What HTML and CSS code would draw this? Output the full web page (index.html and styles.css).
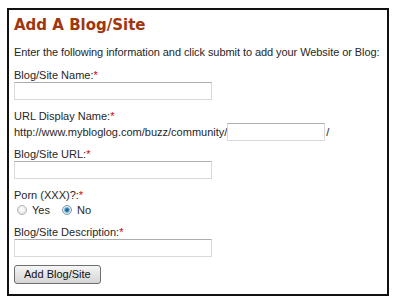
FILE: index.html
```html
<!DOCTYPE html>
<html>
<head>
<meta charset="utf-8">
<link rel="stylesheet" href="styles.css">
</head>
<body>
<div class="box">
  <h1 class="title">Add A Blog/Site</h1>
  <p class="intro">Enter the following information and click submit to add your Website or Blog:</p>

  <div class="label gap10">Blog/Site Name:<span class="req">*</span></div>
  <input class="field" type="text">

  <div class="label gap10">URL Display Name:<span class="req">*</span></div>
  <div class="urlrow">
    <span>http://www.mybloglog.com/buzz/community/</span>
    <input class="field short" type="text">
    <span class="slash">/</span>
  </div>

  <div class="label gap7">Blog/Site URL:<span class="req">*</span></div>
  <input class="field" type="text">

  <div class="label gap10">Porn (XXX)?:<span class="req">*</span></div>
  <div class="radios">
    <label class="opt"><input type="radio" name="porn" class="radio"><span>Yes</span></label>
    <label class="opt second"><input type="radio" name="porn" class="radio" checked><span>No</span></label>
  </div>

  <div class="label gap9">Blog/Site Description:<span class="req">*</span></div>
  <input class="field" type="text">

  <button class="submit" type="button">Add Blog/Site</button>
</div>
</body>
</html>
```

FILE: styles.css
```css
html, body {
  margin: 0;
  padding: 0;
  background: #fff;
}

body {
  font-family: "Liberation Sans", Arial, sans-serif;
  font-size: 11px;
  color: #262626;
}

.box {
  margin: 8px 0 0 7px;
  width: 382px;
  box-sizing: border-box;
  border: 2px solid #111;
  padding: 5px 5px 10px 5px;
}

.title {
  margin: 0;
  font-family: "DejaVu Sans", Verdana, sans-serif;
  font-size: 15px;
  line-height: 21px;
  font-weight: bold;
  color: #a0360e;
}

.intro {
  margin: 10px 0 0 0;
  line-height: 13px;
  white-space: nowrap;
  letter-spacing: -0.07px;
}

.label {
  line-height: 13px;
  height: 13px;
}

.gap10 { margin-top: 10px; }
.gap9 { margin-top: 9px; }
.gap7 { margin-top: 7px; }

.req {
  color: #d40000;
}

.field {
  display: block;
  box-sizing: border-box;
  width: 198px;
  height: 18px;
  margin: 0;
  padding: 0 2px;
  border: 1px solid #d9d9d9;
  border-top-color: #adadad;
  background: #fff;
  font-family: "Liberation Sans", Arial, sans-serif;
  font-size: 11px;
}

.urlrow {
  display: flex;
  align-items: center;
  height: 18px;
  line-height: 13px;
  white-space: nowrap;
}

.field.short {
  width: 98px;
  margin-left: 0;
}

.slash {
  margin-left: 1px;
}

.radios {
  display: flex;
  align-items: center;
  height: 14px;
  margin-top: 1px;
}

.opt {
  display: flex;
  align-items: center;
}

.opt.second {
  margin-left: 9px;
}

.radio {
  appearance: none;
  -webkit-appearance: none;
  width: 10px;
  height: 10px;
  margin: 0 5px 0 3px;
  border-radius: 50%;
  border: 1px solid #b0b0b0;
  background: radial-gradient(circle at 50% 40%, #ffffff 0, #f2f2f2 40%, #d8d8d8 100%);
  box-sizing: border-box;
}

.radio:checked {
  border-color: #8a98a2;
  background: radial-gradient(circle, #1d4f6e 0, #2f7aa6 1.5px, #7cc4e4 2.6px, #dfe9ee 3.5px, #eef2f4 100%);
}

.submit {
  display: block;
  margin: 8px 0 0 0;
  height: 19px;
  padding: 0 9px;
  border: 1px solid #6e6e6e;
  border-radius: 3px;
  background: linear-gradient(#f6f6f6, #e4e4e4 50%, #d6d6d6);
  font-family: "Liberation Sans", Arial, sans-serif;
  font-size: 11px;
  line-height: 17px;
  color: #111;
}
```
